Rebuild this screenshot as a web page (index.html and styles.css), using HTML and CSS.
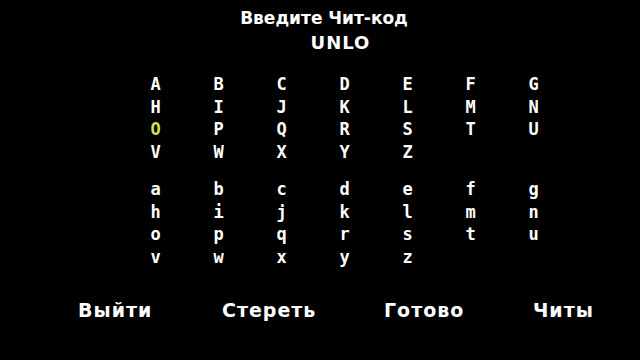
FILE: index.html
```html
<!DOCTYPE html>
<html lang="ru">
<head>
<meta charset="utf-8">
<link rel="stylesheet" href="styles.css">
</head>
<body>
<div class="screen">
  <header class="head">
    <div class="title">Введите Чит-код</div>
    <div class="entry">UNLO</div>
  </header>
  <div class="keys upper">
    <span>A</span><span>B</span><span>C</span><span>D</span><span>E</span><span>F</span><span>G</span>
    <span>H</span><span>I</span><span>J</span><span>K</span><span>L</span><span>M</span><span>N</span>
    <span class="sel">O</span><span>P</span><span>Q</span><span>R</span><span>S</span><span>T</span><span>U</span>
    <span>V</span><span>W</span><span>X</span><span>Y</span><span>Z</span>
  </div>
  <div class="keys lower">
    <span>a</span><span>b</span><span>c</span><span>d</span><span>e</span><span>f</span><span>g</span>
    <span>h</span><span>i</span><span>j</span><span>k</span><span>l</span><span>m</span><span>n</span>
    <span>o</span><span>p</span><span>q</span><span>r</span><span>s</span><span>t</span><span>u</span>
    <span>v</span><span>w</span><span>x</span><span>y</span><span>z</span>
  </div>
  <nav class="actions">
    <span>Выйти</span>
    <span>Стереть</span>
    <span>Готово</span>
    <span>Читы</span>
  </nav>
</div>
</body>
</html>
```
FILE: styles.css
```css
html, body {
  margin: 0;
  padding: 0;
  background: #000;
}
.screen {
  width: 640px;
  height: 360px;
  background: #000;
  color: #fff;
  font-family: "DejaVu Sans", Verdana, sans-serif;
  display: flex;
  flex-direction: column;
}
.head {
  display: flex;
  flex-direction: column;
  align-items: center;
  padding-top: 7px;
  font-weight: bold;
  font-size: 17px;
}
.title {
  line-height: 23px;
  padding-left: 8px;
}
.entry {
  font-size: 18px;
  letter-spacing: 1px;
  line-height: 26px;
  padding-left: 41px;
}
.keys {
  display: grid;
  grid-template-columns: repeat(7, 63px);
  grid-auto-rows: 22.5px;
  margin-left: 124px;
  font-family: "DejaVu Sans Mono", "Liberation Mono", monospace;
  font-weight: bold;
  font-size: 17px;
  line-height: 22.5px;
  text-align: center;
}
.upper {
  margin-top: 17px;
}
.lower {
  margin-top: 15px;
}
.sel {
  color: #d6e04a;
}
.actions {
  display: grid;
  grid-template-columns: 144px 162px 149px auto;
  padding-left: 78px;
  margin-top: 29px;
  font-weight: bold;
  font-size: 19px;
  letter-spacing: 1px;
  line-height: 26px;
}
```
